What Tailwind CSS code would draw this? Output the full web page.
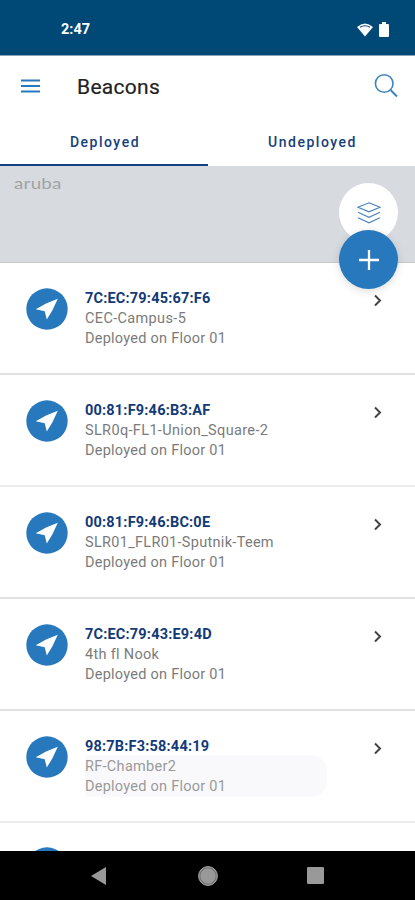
<!DOCTYPE html>
<html lang="en">
<head>
<meta charset="utf-8">
<title>Beacons</title>
<script src="https://cdn.jsdelivr.net/npm/@tailwindcss/browser@4"></script>
</head>
<body class="bg-white">
<svg class="hidden">
  <symbol id="beacon" viewBox="0 0 42 42"><circle cx="21" cy="21" r="20.7" fill="#2878bd"/><path d="M31.8 10.8 20 15.6 9.8 21.3 18.7 23.2 20.8 31.5 26.3 22.5Z" fill="#fff"/></symbol>
  <symbol id="chevron" viewBox="0 0 10 14"><path d="M2 1.5 7 6.5 2 11.5" fill="none" stroke="#444" stroke-width="2"/></symbol>
</svg>
<div class="flex h-[900px] w-[415px] flex-col overflow-hidden font-['Roboto',sans-serif]">
  <header class="flex h-[56px] shrink-0 items-center border-b border-[#8aa3bb] bg-[#004876] pt-[4px] pr-[26px] pl-[61px]">
    <span class="text-[14.5px] font-bold text-white">2:47</span>
    <svg class="ml-auto" width="16" height="14" viewBox="0 0 16 14"><path d="M0 4Q8-3 16 4L8 13.5Z" fill="#fff"/><path d="M3 4.3Q8 1.2 13 4.3" fill="none" stroke="#004876" stroke-width="1.2"/></svg>
    <svg class="ml-[6px]" width="10" height="15" viewBox="0 0 10 15"><path d="M3 0h4v2h2a1 1 0 0 1 1 1v11a1 1 0 0 1-1 1H1a1 1 0 0 1-1-1V3a1 1 0 0 1 1-1h2Z" fill="#fff"/></svg>
  </header>
  <div class="flex h-[61px] shrink-0 items-center pr-[16px] pl-[21px]">
    <svg class="-mt-[2px]" width="19" height="14" viewBox="0 0 19 14"><path d="M0 1.5h19M0 7h19M0 12.5h19" stroke="#2878bd" stroke-width="1.9"/></svg>
    <h1 class="ml-[37px] pt-[2px] text-[21px] font-normal tracking-[0.3px] text-[#222] [-webkit-text-stroke:0.2px_#222]">Beacons</h1>
    <svg class="-mt-[2px] ml-auto" width="25" height="25" viewBox="0 0 25 25" fill="none" stroke="#3d82bd"><circle cx="10.2" cy="10.5" r="8.8" stroke-width="1.6"/><path d="m16.5 17 6.5 6.5" stroke-width="2"/></svg>
  </div>
  <nav class="flex h-[49px] shrink-0 text-[14px] font-medium tracking-[1.5px] text-[#17407a]">
    <div class="flex w-[208px] items-center justify-center border-b-2 border-[#123f7d] pt-[3px] pl-[2px]">Deployed</div>
    <div class="flex flex-1 items-center justify-center border-b-2 border-white pt-[3px] pl-[2px]">Undeployed</div>
  </nav>
  <section class="relative h-[97px] shrink-0 border-b border-[#c5c8cc] bg-[#d7dadf] pt-[6px] pl-[14px]">
    <span class="inline-block origin-left scale-x-[1.25] font-['Lato',sans-serif] text-[15px] leading-[19px] tracking-[0.2px] text-[#a0a3a6]">aruba</span>
    <div class="absolute top-[17px] left-[339px] flex h-[59px] w-[59px] items-center justify-center rounded-full bg-white">
      <svg width="24" height="22" viewBox="0 0 24 22" fill="none" stroke="#4a86bd" stroke-width="1.2"><path d="M12 .8 23 5.3 12 9.8 1 5.3ZM1 10.3l11 5 11-5M1 15.8l11 5 11-5"/></svg>
    </div>
    <div class="absolute top-[64px] left-[339px] z-10 flex h-[59px] w-[59px] items-center justify-center rounded-full bg-[#2878bd] shadow-[0_2px_8px_rgba(0,0,0,0.14)]">
      <svg width="20" height="20" viewBox="0 0 20 20"><path d="M10 0v20M0 10h20" stroke="#fff" stroke-width="2.3"/></svg>
    </div>
  </section>
  <main class="flex h-[588px] shrink-0 flex-col overflow-hidden text-[14.5px] leading-[20px] text-[#7b7b7b]">
    <article class="flex h-[112px] shrink-0 border-b-2 border-[#e0e1e2] pt-[25px] pl-[26px]">
      <svg width="42" height="42"><use href="#beacon"/></svg>
      <div class="mt-px ml-[17px]"><p class="font-bold tracking-[0.2px] text-[#123a77]">7C:EC:79:45:67:F6</p><p class="tracking-[0.35px]">CEC-Campus-5</p><p class="tracking-[0.25px]">Deployed on Floor 01</p></div>
      <svg class="mt-[6px] mr-[32px] ml-auto" width="10" height="14"><use href="#chevron"/></svg>
    </article>
    <article class="flex h-[112px] shrink-0 border-b-2 border-[#ebecee] pt-[25px] pl-[26px]">
      <svg width="42" height="42"><use href="#beacon"/></svg>
      <div class="mt-px ml-[17px]"><p class="font-bold tracking-[0.2px] text-[#123a77]">00:81:F9:46:B3:AF</p><p class="tracking-[0.35px]">SLR0q-FL1-Union_Square-2</p><p class="tracking-[0.25px]">Deployed on Floor 01</p></div>
      <svg class="mt-[6px] mr-[32px] ml-auto" width="10" height="14"><use href="#chevron"/></svg>
    </article>
    <article class="flex h-[112px] shrink-0 border-b-2 border-[#e0e1e2] pt-[25px] pl-[26px]">
      <svg width="42" height="42"><use href="#beacon"/></svg>
      <div class="mt-px ml-[17px]"><p class="font-bold tracking-[0.2px] text-[#123a77]">00:81:F9:46:BC:0E</p><p class="tracking-[0.3px]">SLR01_FLR01-Sputnik-Teem</p><p class="tracking-[0.25px]">Deployed on Floor 01</p></div>
      <svg class="mt-[6px] mr-[32px] ml-auto" width="10" height="14"><use href="#chevron"/></svg>
    </article>
    <article class="flex h-[112px] shrink-0 border-b-2 border-[#e0e1e2] pt-[25px] pl-[26px]">
      <svg width="42" height="42"><use href="#beacon"/></svg>
      <div class="mt-px ml-[17px]"><p class="font-bold tracking-[0.2px] text-[#123a77]">7C:EC:79:43:E9:4D</p><p class="tracking-[0.3px]">4th fl Nook</p><p class="tracking-[0.25px]">Deployed on Floor 01</p></div>
      <svg class="mt-[6px] mr-[32px] ml-auto" width="10" height="14"><use href="#chevron"/></svg>
    </article>
    <article class="flex h-[112px] shrink-0 border-b-2 border-[#ebecee] pt-[25px] pl-[26px]">
      <svg width="42" height="42"><use href="#beacon"/></svg>
      <div class="mt-px ml-[17px]"><p class="font-bold tracking-[0.2px] text-[#123a77]">98:7B:F3:58:44:19</p><div class="-mt-[2px] w-[242px] rounded-r-[16px] bg-[#f9f9fb] pt-[2px] text-[#999]"><p class="tracking-[0.3px]">RF-Chamber2</p><p class="tracking-[0.25px]">Deployed on Floor 01</p></div></div>
      <svg class="mt-[6px] mr-[32px] ml-auto" width="10" height="14"><use href="#chevron"/></svg>
    </article>
    <article class="flex h-[112px] shrink-0 pt-[24px] pl-[26px]">
      <svg width="42" height="42"><use href="#beacon"/></svg>
    </article>
  </main>
  <footer class="flex flex-1 items-center bg-black pl-[91px]">
    <svg width="15" height="18" viewBox="0 0 15 18"><path d="M15 0v18L0 9Z" fill="#999"/></svg>
    <svg class="ml-[92px]" width="20" height="20" viewBox="0 0 20 20"><circle cx="10" cy="10" r="9.4" fill="#777" stroke="#aaa"/><circle cx="10" cy="10" r="7.5" fill="#999"/></svg>
    <div class="ml-[89px] h-[17px] w-[17px] rounded-[1px] bg-[#999]"></div>
  </footer>
</div>
</body>
</html>
